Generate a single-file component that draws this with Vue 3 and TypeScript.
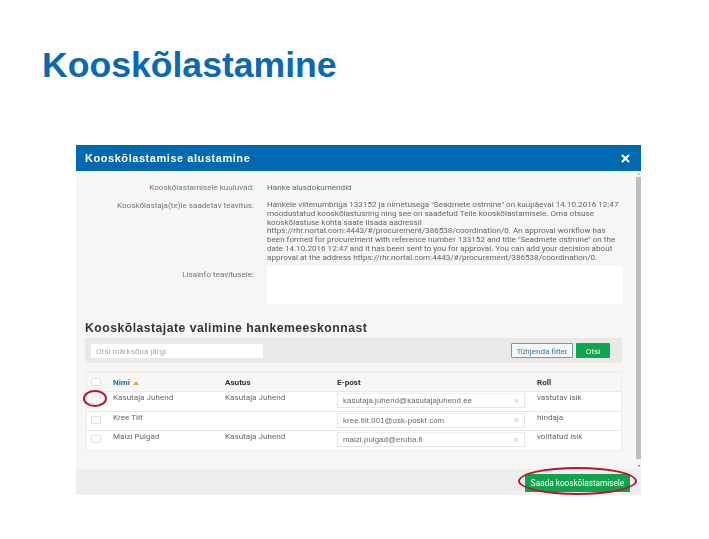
<script setup lang="ts">
interface Person {
  name: string
  org: string
  email: string
  role: string
}

const noticeLines: string[] = [
  'Hankele viitenumbriga 133152 ja nimetusega "Seadmete ostmine" on kuupäeval 14.10.2016 12:47',
  'moodustatud kooskõlastusring ning see on saadetud Teile kooskõlastamisele. Oma otsuse',
  'kooskõlastuse kohta saate lisada aadressil',
  'https://rhr.nortal.com:4443/#/procurement/386538/coordination/0. An approval workflow has',
  'been formed for procurement with reference number 133152 and title "Seadmete ostmine" on the',
  'date 14.10.2016 12:47 and it has been sent to you for approval. You can add your decision about',
  'approval at the address https://rhr.nortal.com:4443/#/procurement/386538/coordination/0.'
]

const people: Person[] = [
  { name: 'Kasutaja Juhend', org: 'Kasutaja Juhend', email: 'kasutaja.juhend@kasutajajuhend.ee', role: 'vastutav isik' },
  { name: 'Kree Tiit', org: '', email: 'kree.tiit.001@osk-poskf.com', role: 'hindaja' },
  { name: 'Maizi Pulgad', org: 'Kasutaja Juhend', email: 'maizi.pulgad@eruba.fi', role: 'volitatud isik' }
]
</script>

<template>
  <div class="slide">
    <h1 class="slide-title">Kooskõlastamine</h1>

    <div class="dialog">
      <header class="dialog-head">
        <span>Kooskõlastamise alustamine</span>
        <svg width="9" height="9" viewBox="0 0 9 9">
          <path d="M1 1l7 7M8 1L1 8" stroke="#fff" stroke-width="2" />
        </svg>
      </header>

      <div class="dialog-main">
        <div class="dialog-body">
          <div class="form-row first">
            <div class="label">Kooskõlastamisele kuuluvad:</div>
            <div>Hanke alusdokumendid</div>
          </div>
          <div class="form-row notice">
            <div class="label">Kooskõlastaja(te)le saadetav teavitus:</div>
            <div class="notice-text">
              <div v-for="line in noticeLines" :key="line">{{ line }}</div>
            </div>
          </div>
          <div class="form-row">
            <div class="label extra">Lisainfo teavitusele:</div>
            <div class="textarea"></div>
          </div>

          <h2 class="section-title">Kooskõlastajate valimine hankemeeskonnast</h2>

          <div class="filter">
            <div class="search">Otsi märksõna järgi</div>
            <button class="btn-clear">Tühjenda filter</button>
            <button class="btn-search">Otsi</button>
          </div>

          <div class="table">
            <div class="tr th">
              <span class="check"></span>
              <span class="name-head">Nimi <i class="sort"></i></span>
              <span>Asutus</span>
              <span>E-post</span>
              <span>Roll</span>
            </div>
            <div v-for="p in people" :key="p.name" class="tr">
              <span class="check"></span>
              <span class="cell">{{ p.name }}</span>
              <span class="cell">{{ p.org }}</span>
              <span class="email">
                <span>{{ p.email }}</span>
                <b>×</b>
              </span>
              <span class="cell">{{ p.role }}</span>
            </div>
          </div>
        </div>
        <div class="scrollbar">
          <i class="arrow up"></i>
          <div class="thumb"></div>
          <i class="arrow down"></i>
        </div>
      </div>

      <footer class="dialog-foot">
        <button class="btn-send">Saada kooskõlastamisele</button>
      </footer>

      <div class="ring ring-check"></div>
      <div class="ring ring-send"></div>
    </div>
  </div>
</template>

<style>
html,
body {
  background: #fff;
}
</style>

<style scoped>
.slide {
  width: 709px;
  height: 539px;
  overflow: hidden;
  padding: 45px 0 0 42px;
  box-sizing: border-box;
  font-family: "Liberation Sans", Arial, sans-serif;
}

.slide-title {
  margin: 0;
  font-size: 35.6px;
  line-height: 40px;
  font-weight: 700;
  color: #0c68b0;
}

.dialog {
  position: relative;
  width: 565px;
  height: 350px;
  margin: 60px 0 0 34px;
  display: flex;
  flex-direction: column;
  background: #f7f6f4;
  font-family: Roboto, "Liberation Sans", sans-serif;
  font-size: 8.1px;
  color: #666;
  filter: blur(0.4px);
}

.dialog-head {
  height: 26px;
  flex: none;
  display: flex;
  align-items: center;
  justify-content: space-between;
  padding: 0 11px 0 9px;
  background: #0069b0;
  color: #fff;
  font-family: "Liberation Sans", sans-serif;
  font-size: 11px;
  font-weight: 700;
  letter-spacing: 0.55px;
}

.dialog-main {
  flex: 1;
  display: flex;
  min-height: 0;
}

.dialog-body {
  flex: 1;
  min-width: 0;
  padding: 11px 14px 0 9px;
}

.form-row {
  display: grid;
  grid-template-columns: 169px 356px;
  column-gap: 13px;
}

.form-row.first {
  height: 19px;
  line-height: 10px;
}

.notice {
  line-height: 8.75px;
  height: 65px;
}

.notice-text {
  white-space: nowrap;
  margin-top: -1px;
}

.label {
  text-align: right;
  color: #777;
  white-space: nowrap;
}

.extra {
  margin-top: 3px;
}

.textarea {
  height: 38px;
  background: #fff;
}

.section-title {
  margin: 18px 0 4px;
  font-family: "Liberation Sans", sans-serif;
  font-size: 12.2px;
  line-height: 12px;
  font-weight: 700;
  color: #333;
  letter-spacing: 0.49px;
}

.filter {
  height: 25px;
  display: flex;
  align-items: center;
  padding: 0 12px 0 6px;
  background: #e9e9e8;
}

.search {
  width: 172px;
  height: 14px;
  line-height: 14px;
  padding-left: 5px;
  box-sizing: border-box;
  background: #fff;
  color: #aaa;
  margin-right: auto;
}

.filter button {
  height: 15px;
  padding: 0;
  font: inherit;
  border-radius: 1px;
}

.btn-clear {
  width: 62px;
  margin-right: 3px;
  background: #f5f7f8;
  border: 1px solid #6f96b8;
  color: #3d78a8;
}

.btn-search {
  width: 34px;
  border: 0;
  background: #10a550;
  color: #fff;
}

.table {
  margin: 9px 0 0 1px;
  width: 536px;
  border: 1px solid #eeedeb;
  box-sizing: border-box;
}

.tr {
  display: grid;
  grid-template-columns: 22px 112px 112px 200px 1fr;
  height: 19.6px;
  padding-left: 4px;
  box-sizing: border-box;
  background: #fff;
  border-top: 1px solid #e8e8e7;
}

.th {
  height: 18px;
  border-top: 0;
  align-items: center;
  background: #f8f7f5;
  color: #333;
  font-weight: 700;
}

.th .check {
  margin-top: 0;
}

.name-head {
  color: #2a6ea5;
}

.sort {
  display: inline-block;
  border-left: 3px solid transparent;
  border-right: 3px solid transparent;
  border-bottom: 4px solid #e2a14a;
  margin-left: 1px;
}

.check {
  width: 10px;
  height: 8px;
  box-sizing: border-box;
  margin-top: 4px;
  border: 1px solid #e2e2e2;
  background: #fff;
}

.cell {
  line-height: 11px;
}

.email {
  height: 15px;
  width: 188px;
  margin-top: 1px;
  display: flex;
  align-items: center;
  justify-content: space-between;
  padding: 0 5px;
  box-sizing: border-box;
  border: 1px solid #e5e5e5;
  border-top-color: #efefef;
  font-family: "Liberation Sans", sans-serif;
  font-size: 7.8px;
  letter-spacing: 0.1px;
}

.email b {
  color: #d4d4d4;
  font-size: 9px;
}

.scrollbar {
  width: 5px;
  flex: none;
  display: flex;
  flex-direction: column;
  align-items: center;
  background: #f4f4f4;
}

.thumb {
  flex: 1;
  width: 100%;
  margin-bottom: 4px;
  background: #bfbfbf;
}

.arrow {
  flex: none;
  margin: 2px 0;
  border-left: 1.5px solid transparent;
  border-right: 1.5px solid transparent;
}

.up {
  border-bottom: 2px solid #999;
}

.down {
  border-top: 2px solid #555;
}

.dialog-foot {
  height: 26px;
  flex: none;
  display: flex;
  justify-content: flex-end;
  align-items: center;
  padding: 1px 11px 0 0;
  box-sizing: border-box;
  background: #eeeeee;
}

.btn-send {
  width: 105px;
  height: 18px;
  padding: 0;
  border: 0;
  background: #10a24d;
  color: #fff;
  font: inherit;
  font-size: 8.2px;
}

.ring {
  position: absolute;
  box-sizing: border-box;
  border: 2px solid #b81532;
  border-radius: 50%;
}

.ring-check {
  left: 7px;
  top: 245px;
  width: 24px;
  height: 17px;
}

.ring-send {
  left: 442px;
  top: 322px;
  width: 119px;
  height: 28px;
}
</style>
